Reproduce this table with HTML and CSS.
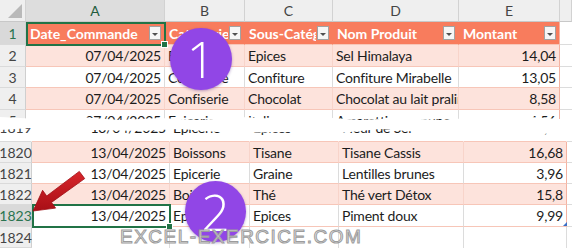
FILE: index.html
```html
<!DOCTYPE html>
<html lang="fr">
<head>
<meta charset="utf-8">
<title>Excel</title>
<link rel="stylesheet" href="styles.css">
</head>
<body>
<div class="sheet">
  <div class="top">
    <div class="row h22">
      <div class="ch corner"></div>
      <div class="ch sel">A</div>
      <div class="ch">B</div>
      <div class="ch">C</div>
      <div class="ch">D</div>
      <div class="ch">E</div>
      <div class="ch"></div>
    </div>
    <div class="row h23">
      <div class="rh sel">1</div>
      <div class="c th"><span class="t">Date_Commande</span><span class="fb"></span></div>
      <div class="c th"><span class="t">Catégorie</span><span class="fb"></span></div>
      <div class="c th"><span class="t">Sous-Catégorie</span><span class="fb"></span></div>
      <div class="c th"><span class="t">Nom Produit</span><span class="fb"></span></div>
      <div class="c th last"><span class="t">Montant</span><span class="fb"></span></div>
      <div class="c out"></div>
    </div>
    <div class="row h22 band">
      <div class="rh">2</div>
      <div class="c num">07/04/2025</div>
      <div class="c">Epicerie</div>
      <div class="c">Epices</div>
      <div class="c">Sel Himalaya</div>
      <div class="c num last">14,04</div>
      <div class="c out"></div>
    </div>
    <div class="row h21">
      <div class="rh">3</div>
      <div class="c num">07/04/2025</div>
      <div class="c">Confiserie</div>
      <div class="c">Confiture</div>
      <div class="c">Confiture Mirabelle</div>
      <div class="c num last">13,05</div>
      <div class="c out"></div>
    </div>
    <div class="row h22 band">
      <div class="rh">4</div>
      <div class="c num">07/04/2025</div>
      <div class="c">Confiserie</div>
      <div class="c">Chocolat</div>
      <div class="c">Chocolat au lait praliné</div>
      <div class="c num last">8,58</div>
      <div class="c out"></div>
    </div>
    <div class="row h22">
      <div class="rh">5</div>
      <div class="c num">07/04/2025</div>
      <div class="c">Epicerie</div>
      <div class="c">Italie</div>
      <div class="c">Amaretti commune</div>
      <div class="c num last">4,56</div>
      <div class="c out"></div>
    </div>
  </div>

  <div class="bottom">
    <div class="row h21 torn">
      <div class="rh">1819</div>
      <div class="c num">13/04/2025</div>
      <div class="c">Epicerie</div>
      <div class="c">Epices</div>
      <div class="c">Fleur de Sel</div>
      <div class="c num">6,59</div>
      <div class="c out"></div>
    </div>
    <div class="row h21 band">
      <div class="rh">1820</div>
      <div class="c num">13/04/2025</div>
      <div class="c">Boissons</div>
      <div class="c">Tisane</div>
      <div class="c">Tisane Cassis</div>
      <div class="c num last">16,68</div>
      <div class="c out"></div>
    </div>
    <div class="row h21">
      <div class="rh">1821</div>
      <div class="c num">13/04/2025</div>
      <div class="c">Epicerie</div>
      <div class="c">Graine</div>
      <div class="c">Lentilles brunes</div>
      <div class="c num last">3,96</div>
      <div class="c out"></div>
    </div>
    <div class="row h21 band">
      <div class="rh">1822</div>
      <div class="c num">13/04/2025</div>
      <div class="c">Boissons</div>
      <div class="c">Thé</div>
      <div class="c">Thé vert Détox</div>
      <div class="c num last">15,8</div>
      <div class="c out"></div>
    </div>
    <div class="row h22">
      <div class="rh sel">1823</div>
      <div class="c num">13/04/2025</div>
      <div class="c">Epicerie</div>
      <div class="c">Epices</div>
      <div class="c">Piment doux</div>
      <div class="c num last">9,99</div>
      <div class="c out"></div>
    </div>
    <div class="row h21 empty">
      <div class="rh">1824</div>
      <div class="c"></div>
      <div class="c"></div>
      <div class="c"></div>
      <div class="c"></div>
      <div class="c"></div>
      <div class="c out"></div>
    </div>
  </div>

  <div class="selbox s1"></div>
  <div class="selbox s2"></div>
  <div class="resize"></div>
  <div class="badge b1">1</div>
  <div class="badge b2">2</div>
  <svg class="arrow" width="62" height="50" viewBox="0 0 62 50" aria-hidden="true">
    <defs>
      <linearGradient id="ag" x1="0" y1="0" x2="0" y2="1">
        <stop offset="0" stop-color="#d8262b"/>
        <stop offset="1" stop-color="#a80f16"/>
      </linearGradient>
    </defs>
    <polygon points="5,43 27.6,40.1 23.5,34.4 56.7,10.6 51.3,3.4 18.7,28 14.6,22.3" fill="url(#ag)" stroke="#9e0d14" stroke-width="0.8" stroke-linejoin="round"/>
  </svg>
  <div class="wm">EXCEL-EXERCICE.COM</div>
</div>
</body>
</html>
```

FILE: styles.css
```css
html, body {
  margin: 0;
  padding: 0;
  background: #ffffff;
}

body {
  font-family: Lato, "Liberation Sans", sans-serif;
  font-size: 14px;
  color: #1c1c1c;
}

.sheet {
  position: relative;
  width: 572px;
  height: 248px;
  overflow: hidden;
  background: #ffffff;
}

.top {
  height: 121px;
  overflow: hidden;
  clip-path: polygon(0 0, 100% 0, 100% 118px, 560px 119px, 530px 117px, 500px 119px, 470px 118px, 440px 120px, 400px 118px, 360px 120px, 320px 117px, 280px 119px, 240px 117px, 200px 120px, 160px 118px, 120px 120px, 80px 117px, 40px 119px, 0 117px);
}

.row {
  display: grid;
}

.top .row {
  grid-template-columns: 26px 139px 80px 88px 126px 101px 12px;
}

.bottom .row {
  grid-template-columns: 32px 138px 80px 89px 125px 103px 5px;
}

.h21 { height: 21px; }
.h22 { height: 22px; }
.h23 { height: 23px; }

.ch {
  box-sizing: border-box;
  display: flex;
  align-items: center;
  justify-content: center;
  background: #efefef;
  color: #444444;
  border-right: 1px solid #d2d2d2;
  border-bottom: 1px solid #c8c8c8;
  font-size: 14px;
}

.ch.sel {
  background: #dddddd;
  color: #1f5c3c;
}

.corner {
  position: relative;
}

.corner::after {
  content: "";
  position: absolute;
  right: 3px;
  bottom: 3px;
  width: 14px;
  height: 14px;
  background: #b9b9b9;
  clip-path: polygon(100% 0, 100% 100%, 0 100%);
}

.rh {
  box-sizing: border-box;
  display: flex;
  align-items: center;
  justify-content: center;
  background: #efefef;
  color: #444444;
  border-right: 1px solid #cfcfcf;
  border-bottom: 1px solid #dadada;
}

.rh.sel {
  background: #d9d9d9;
  color: #2a7450;
}

.c {
  box-sizing: border-box;
  display: flex;
  align-items: center;
  padding: 0 3px;
  white-space: nowrap;
  overflow: hidden;
  background: #ffffff;
  border-right: 1px solid #dcdcdc;
  border-bottom: 1px solid #f7c6b8;
  letter-spacing: -0.2px;
}

.band .c {
  background: #fde3dc;
  border-right-color: #f8d4ca;
}

.c.num {
  justify-content: flex-end;
}

.c.last,
.band .c.last {
  border-right-color: #f4b3a2;
}

.c.out,
.band .c.out {
  background: #ffffff;
  border-right: none;
  border-bottom-color: #dcdcdc;
}

.th {
  background: #f87c5d;
  color: #ffffff;
  font-weight: 700;
  padding: 0 3px 0 4px;
  border-right-color: #f87c5d;
  letter-spacing: 0;
}

.th .t {
  flex: 1;
  overflow: hidden;
}

.fb {
  box-sizing: border-box;
  flex: none;
  width: 12px;
  height: 14px;
  margin-left: 1px;
  border: 1px solid #a2a2a2;
  background: #f6f6f6;
  display: flex;
  align-items: center;
  justify-content: center;
  padding-top: 2px;
}

.fb::before {
  content: "";
  width: 0;
  height: 0;
  border-left: 3px solid transparent;
  border-right: 3px solid transparent;
  border-top: 3px solid #505050;
}

.torn {
  clip-path: polygon(0 9px, 30px 7px, 60px 11px, 95px 9px, 140px 10px, 180px 8px, 230px 12px, 290px 11px, 340px 12px, 380px 8px, 420px 11px, 450px 17px, 500px 19px, 530px 13px, 572px 12px, 572px 100%, 0 100%);
}

.torn .rh,
.torn .c {
  align-items: flex-start;
  line-height: 14px;
  padding-top: 0;
  background: #ffffff;
  border-right-color: transparent;
}

.torn .rh {
  border-bottom-color: #dadada;
}

.empty .c {
  border-bottom: none;
}

.selbox {
  position: absolute;
  box-sizing: border-box;
  border: 2px solid #217346;
}

.selbox::after {
  content: "";
  position: absolute;
  right: -4px;
  bottom: -4px;
  width: 5px;
  height: 5px;
  background: #217346;
  border: 1px solid #ffffff;
}

.s1 {
  left: 26px;
  top: 22px;
  width: 140px;
  height: 24px;
}

.s2 {
  left: 32px;
  top: 204px;
  width: 139px;
  height: 24px;
}

.resize {
  position: absolute;
  left: 563px;
  top: 222px;
  width: 4px;
  height: 4px;
  background: #3b6fc4;
  clip-path: polygon(100% 0, 100% 100%, 0 100%);
}

.badge {
  position: absolute;
  width: 62px;
  height: 62px;
  border-radius: 50%;
  background: #9146e6;
  color: #ffffff;
  font-family: "Open Sans", "Noto Sans", sans-serif;
  font-weight: 300;
  font-size: 50px;
  line-height: 1;
  display: flex;
  align-items: center;
  justify-content: center;
  box-shadow: 0 1px 3px rgba(60, 0, 120, 0.35);
}

.b1 {
  left: 170px;
  top: 28px;
}

.b2 {
  left: 185px;
  top: 181px;
  width: 61px;
  height: 61px;
}

.arrow {
  position: absolute;
  left: 28px;
  top: 168px;
}

.wm {
  position: absolute;
  left: 120px;
  top: 226px;
  font-family: "Liberation Sans", Arial, sans-serif;
  font-size: 19px;
  letter-spacing: 1.5px;
  color: rgba(236, 236, 236, 0.9);
  -webkit-text-stroke: 1px #9c9c9c;
  white-space: nowrap;
}
```
